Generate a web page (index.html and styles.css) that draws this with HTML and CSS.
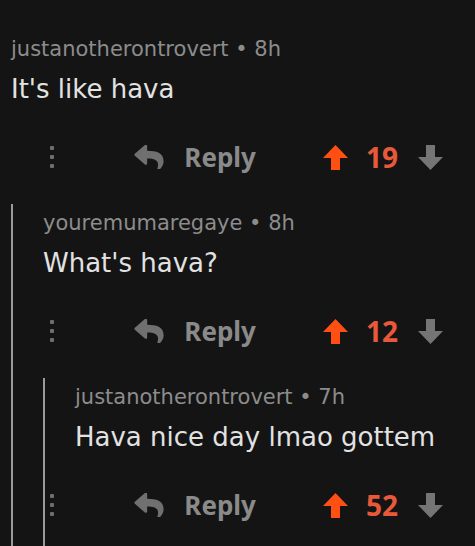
FILE: index.html
```html
<!DOCTYPE html>
<html lang="en">
<head>
<meta charset="utf-8">
<title>Comments</title>
<link rel="stylesheet" href="styles.css">
</head>
<body>
<div class="thread">
  <div class="comment">
    <div class="meta">justanotherontrovert • 8h</div>
    <div class="text">It's like hava</div>
    <div class="actions">
      <span class="dots"><i></i><i></i><i></i></span>
      <svg class="reply-icon" viewBox="0 0 512 420" width="30" height="24"><path d="M8.3 152.8L184.3 0.9C199.7-12.5 224-1.7 224 19v80c160.6 1.8 288 34 288 186.3 0 61.4-39.6 122.3-83.3 154.1-13.7 9.9-33.1-2.5-28.1-18.6 45.3-145-21.5-183.5-176.6-185.7V323c0 20.7-24.3 31.5-39.7 18.2l-176-152c-11.1-9.6-11.1-26.8 0-36.4z"/></svg>
      <span class="reply">Reply</span>
      <svg class="vote up" viewBox="0 0 25 25" width="25" height="25"><polygon points="12.5,0 25,13 17,13 17,25 8,25 8,13 0,13"/></svg>
      <span class="count">19</span>
      <svg class="vote down" viewBox="0 0 25 25" width="25" height="25"><polygon points="12.5,25 25,12 17,12 17,0 8,0 8,12 0,12"/></svg>
    </div>
  </div>
  <div class="children">
    <div class="comment">
      <div class="meta">youremumaregaye • 8h</div>
      <div class="text">What's hava?</div>
      <div class="actions">
        <span class="dots"><i></i><i></i><i></i></span>
        <svg class="reply-icon" viewBox="0 0 512 420" width="30" height="24"><path d="M8.3 152.8L184.3 0.9C199.7-12.5 224-1.7 224 19v80c160.6 1.8 288 34 288 186.3 0 61.4-39.6 122.3-83.3 154.1-13.7 9.9-33.1-2.5-28.1-18.6 45.3-145-21.5-183.5-176.6-185.7V323c0 20.7-24.3 31.5-39.7 18.2l-176-152c-11.1-9.6-11.1-26.8 0-36.4z"/></svg>
        <span class="reply">Reply</span>
        <svg class="vote up" viewBox="0 0 25 25" width="25" height="25"><polygon points="12.5,0 25,13 17,13 17,25 8,25 8,13 0,13"/></svg>
        <span class="count">12</span>
        <svg class="vote down" viewBox="0 0 25 25" width="25" height="25"><polygon points="12.5,25 25,12 17,12 17,0 8,0 8,12 0,12"/></svg>
      </div>
    </div>
    <div class="children last">
      <div class="comment">
        <div class="meta">justanotherontrovert • 7h</div>
        <div class="text">Hava nice day lmao gottem</div>
        <div class="actions">
          <span class="dots"><i></i><i></i><i></i></span>
          <svg class="reply-icon" viewBox="0 0 512 420" width="30" height="24"><path d="M8.3 152.8L184.3 0.9C199.7-12.5 224-1.7 224 19v80c160.6 1.8 288 34 288 186.3 0 61.4-39.6 122.3-83.3 154.1-13.7 9.9-33.1-2.5-28.1-18.6 45.3-145-21.5-183.5-176.6-185.7V323c0 20.7-24.3 31.5-39.7 18.2l-176-152c-11.1-9.6-11.1-26.8 0-36.4z"/></svg>
          <span class="reply">Reply</span>
          <svg class="vote up" viewBox="0 0 25 25" width="25" height="25"><polygon points="12.5,0 25,13 17,13 17,25 8,25 8,13 0,13"/></svg>
          <span class="count">52</span>
          <svg class="vote down" viewBox="0 0 25 25" width="25" height="25"><polygon points="12.5,25 25,12 17,12 17,0 8,0 8,12 0,12"/></svg>
        </div>
      </div>
    </div>
  </div>
</div>
</body>
</html>
```

FILE: styles.css
```css
html, body {
  margin: 0;
  padding: 0;
  height: 100%;
  overflow: hidden;
  background: #141414;
}

body {
  font-family: "DejaVu Sans", "Noto Sans", sans-serif;
}

.thread {
  padding: 35px 32px 0 11px;
}

.meta {
  font-size: 21px;
  line-height: 28px;
  color: #8c8c8c;
  white-space: nowrap;
}

.text {
  margin-top: 9px;
  font-size: 26px;
  line-height: 34px;
  color: #e2e2e2;
  white-space: nowrap;
}

.actions {
  margin-top: 26px;
  height: 50px;
  display: flex;
  align-items: center;
  justify-content: flex-end;
  font-family: "Noto Sans", "Open Sans", sans-serif;
}

.actions > * {
  flex-shrink: 0;
}

.dots {
  display: flex;
  flex-direction: column;
  gap: 5px;
  margin-right: 80px;
}

.dots i {
  display: block;
  width: 4px;
  height: 4px;
  border-radius: 1px;
  background: #6e6e6e;
}

.reply-icon {
  fill: #707070;
  margin-right: 20px;
}

.reply {
  font-size: 26px;
  font-weight: 700;
  color: #8a8a8a;
  margin-right: 67px;
}

.vote.up {
  fill: #ff4f12;
}

.vote.down {
  fill: #757575;
}

.count {
  font-size: 28px;
  font-weight: 700;
  color: #e8593b;
  margin: 0 20px 0 18px;
}

.children {
  margin-top: 22px;
  padding-top: 5px;
  padding-left: 30px;
  border-left: 2px solid #9b9b9b;
}

.children.last {
  padding-bottom: 16px;
}
```
